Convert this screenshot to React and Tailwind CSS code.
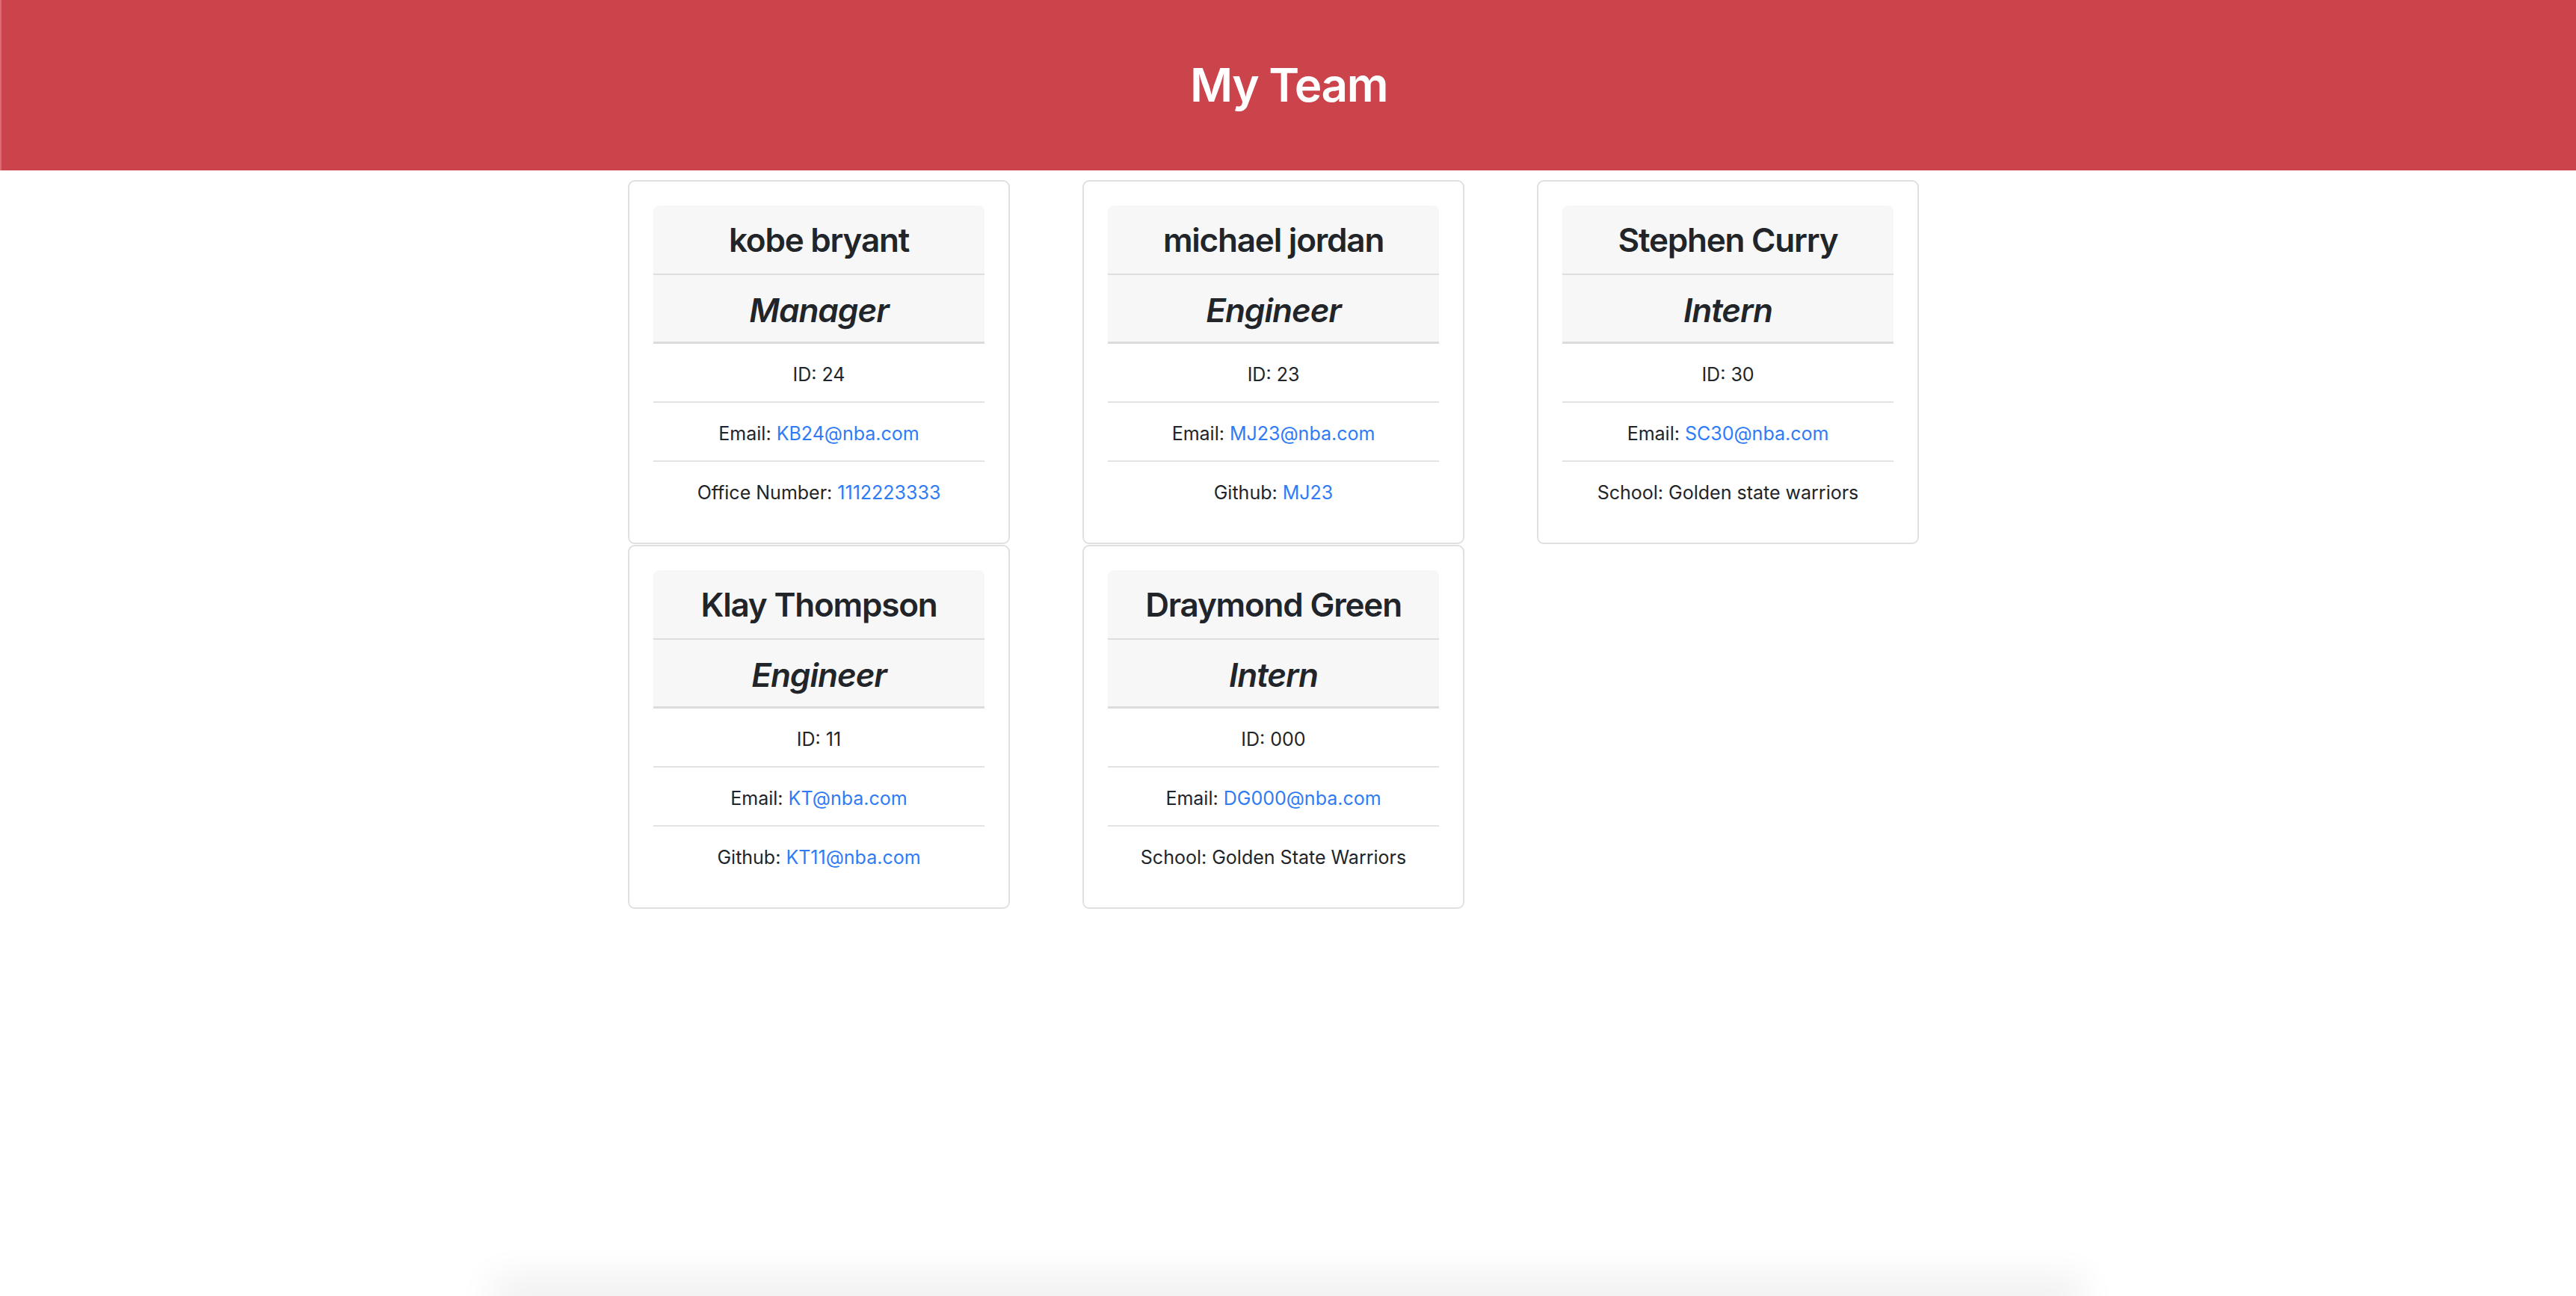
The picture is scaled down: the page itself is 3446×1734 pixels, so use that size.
import React from 'react';

const team = [
  { name: 'kobe bryant', role: 'Manager', id: '24', email: 'KB24@nba.com', extraLabel: 'Office Number', extra: '1112223333', extraLink: true },
  { name: 'michael jordan', role: 'Engineer', id: '23', email: 'MJ23@nba.com', extraLabel: 'Github', extra: 'MJ23', extraLink: true },
  { name: 'Stephen Curry', role: 'Intern', id: '30', email: 'SC30@nba.com', extraLabel: 'School', extra: 'Golden state warriors', extraLink: false },
  { name: 'Klay Thompson', role: 'Engineer', id: '11', email: 'KT@nba.com', extraLabel: 'Github', extra: 'KT11@nba.com', extraLink: true },
  { name: 'Draymond Green', role: 'Intern', id: '000', email: 'DG000@nba.com', extraLabel: 'School', extra: 'Golden State Warriors', extraLink: false },
];

const EmployeeCard = ({ member }) => {
  return (
    <div className="w-[511px] rounded-[9px] border-2 border-[#e0e0e0] bg-white p-[32px]">
      <div className="overflow-hidden rounded-t-[8px] bg-[#f7f7f7] text-center text-[#212529]">
        <h3 className="border-b-2 border-[#dedede] pt-[20px] pb-[18px] text-[44px] leading-[53px] font-semibold tracking-[-1.2px]">{member.name}</h3>
        <h3 className="border-b-[3px] border-[#dcdcdc] pt-[21px] pb-[15px] text-[44px] leading-[53px] font-semibold italic tracking-[-1px]">{member.role}</h3>
      </div>
      <ul className="text-center text-[25px] leading-[37px] text-[#212529]">
        <li className="border-b-2 border-[#e3e3e3] pt-[23px] pb-[17px]">ID: {member.id}</li>
        <li className="border-b-2 border-[#e3e3e3] pt-[23px] pb-[17px]">
          Email: <a href="#" className="text-[#2f7bf5]">{member.email}</a>
        </li>
        <li className="pt-[23px] pb-[16px]">
          {member.extraLabel}: {member.extraLink ? <a href="#" className="text-[#2f7bf5]">{member.extra}</a> : member.extra}
        </li>
      </ul>
    </div>
  );
};

export default function App() {
  return (
    <div className="flex h-[1734px] flex-col overflow-hidden bg-white font-['Inter',sans-serif]">
      <header className="flex h-[228px] items-center justify-center border-l-2 border-[#d86c72] bg-[#cb444b]">
        <h1 className="text-[62px] leading-[74px] font-semibold tracking-[-1.5px] text-white">My Team</h1>
      </header>
      <div className="mx-auto mt-[13px] w-[1766px]">
        <div className="grid grid-cols-[511px_511px_511px] gap-x-[97px] gap-y-[1px]">
          {team.map((m) => (
            <EmployeeCard key={m.name} member={m} />
          ))}
        </div>
      </div>
      <div className="mx-auto mt-auto h-0 w-[2080px] shadow-[0_0_50px_24px_rgba(0,0,0,0.07)]" />
    </div>
  );
}
